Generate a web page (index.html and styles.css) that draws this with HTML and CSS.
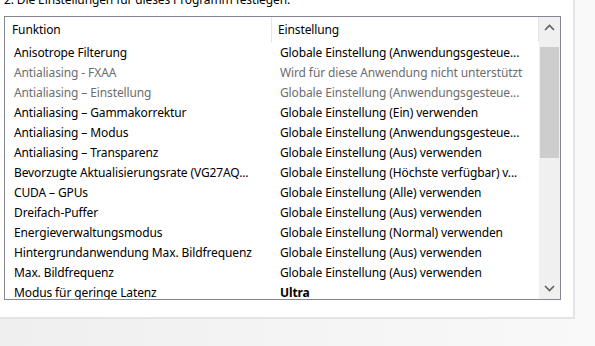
FILE: index.html
```html
<!DOCTYPE html>
<html lang="de">
<head>
    <meta charset="UTF-8">
    <title>Programmeinstellungen</title>
    <link rel="stylesheet" href="styles.css">
</head>
<body>
    <div class="panel">
        <div class="step">2. Die Einstellungen für dieses Programm festlegen.</div>

        <div class="listbox">
            <div class="list">
                <div class="row head">
                    <div class="cell c1">Funktion</div>
                    <div class="cell c2">Einstellung</div>
                </div>
                <div class="row">
                    <div class="cell c1">Anisotrope Filterung</div>
                    <div class="cell c2">Globale Einstellung (Anwendungsgesteue...</div>
                </div>
                <div class="row off">
                    <div class="cell c1">Antialiasing - FXAA</div>
                    <div class="cell c2">Wird für diese Anwendung nicht unterstützt</div>
                </div>
                <div class="row off">
                    <div class="cell c1">Antialiasing – Einstellung</div>
                    <div class="cell c2">Globale Einstellung (Anwendungsgesteue...</div>
                </div>
                <div class="row">
                    <div class="cell c1">Antialiasing – Gammakorrektur</div>
                    <div class="cell c2">Globale Einstellung (Ein) verwenden</div>
                </div>
                <div class="row">
                    <div class="cell c1">Antialiasing – Modus</div>
                    <div class="cell c2">Globale Einstellung (Anwendungsgesteue...</div>
                </div>
                <div class="row">
                    <div class="cell c1">Antialiasing – Transparenz</div>
                    <div class="cell c2">Globale Einstellung (Aus) verwenden</div>
                </div>
                <div class="row">
                    <div class="cell c1">Bevorzugte Aktualisierungsrate (VG27AQ...</div>
                    <div class="cell c2">Globale Einstellung (Höchste verfügbar) v...</div>
                </div>
                <div class="row">
                    <div class="cell c1">CUDA – GPUs</div>
                    <div class="cell c2">Globale Einstellung (Alle) verwenden</div>
                </div>
                <div class="row">
                    <div class="cell c1">Dreifach-Puffer</div>
                    <div class="cell c2">Globale Einstellung (Aus) verwenden</div>
                </div>
                <div class="row">
                    <div class="cell c1">Energieverwaltungsmodus</div>
                    <div class="cell c2">Globale Einstellung (Normal) verwenden</div>
                </div>
                <div class="row">
                    <div class="cell c1">Hintergrundanwendung Max. Bildfrequenz</div>
                    <div class="cell c2">Globale Einstellung (Aus) verwenden</div>
                </div>
                <div class="row">
                    <div class="cell c1">Max. Bildfrequenz</div>
                    <div class="cell c2">Globale Einstellung (Aus) verwenden</div>
                </div>
                <div class="row">
                    <div class="cell c1">Modus für geringe Latenz</div>
                    <div class="cell c2 strong">Ultra</div>
                </div>
            </div>

            <div class="scrollbar">
                <div class="arrow">
                    <svg width="11" height="7" viewBox="0 0 11 7"><path d="M1 6 L5.5 1.5 L10 6" fill="none" stroke="#606060" stroke-width="1.6"/></svg>
                </div>
                <div class="track">
                    <div class="thumb"></div>
                </div>
                <div class="arrow">
                    <svg width="11" height="7" viewBox="0 0 11 7"><path d="M1 1 L5.5 5.5 L10 1" fill="none" stroke="#606060" stroke-width="1.6"/></svg>
                </div>
            </div>
        </div>
    </div>
</body>
</html>
```

FILE: styles.css
```css
body {
    margin: 0;
    height: 346px;
    overflow: hidden;
    background: linear-gradient(to right, #efefef, #f9f9f9);
    font-family: 'Noto Sans', 'Open Sans', sans-serif;
    font-size: 12px;
    letter-spacing: -0.12px;
    color: #000;
}

.panel {
    width: 575px;
    height: 319px;
    background: #fff;
    border-right: 2px solid #e4e4e4;
    border-bottom: 2px solid #e4e4e4;
    box-sizing: border-box;
    overflow: hidden;
}

.step {
    height: 16px;
    line-height: 12px;
    margin-top: -6px;
    padding-left: 4px;
    box-sizing: border-box;
    white-space: nowrap;
}

.listbox {
    display: flex;
    width: 557px;
    height: 284px;
    margin-left: 4px;
    margin-top: 6px;
    border: 1px solid #828790;
    box-sizing: border-box;
    overflow: hidden;
}

.list {
    flex: 1;
    overflow: hidden;
}

.row {
    display: flex;
    height: 20px;
    line-height: 22px;
    white-space: nowrap;
}

.cell {
    overflow: hidden;
    padding-left: 9px;
    box-sizing: border-box;
}

.c1 { width: 267px; }
.c2 { flex: 1; padding-left: 8px; }

.head {
    height: 25px;
    line-height: 26px;
}

.head .cell {
    padding-left: 7px;
    border-right: 1px solid #e5e5e5;
}

.head .c2 { padding-left: 6px; }

.off { color: #6d6d6d; }

.strong { font-weight: bold; }

.scrollbar {
    width: 21px;
    background: #f0f0f0;
    display: flex;
    flex-direction: column;
}

.arrow {
    height: 21px;
    display: flex;
    align-items: center;
    justify-content: center;
}

.track {
    flex: 1;
    padding: 9px 1px 0;
}

.thumb {
    height: 111px;
    background: #cdcdcd;
}
```
